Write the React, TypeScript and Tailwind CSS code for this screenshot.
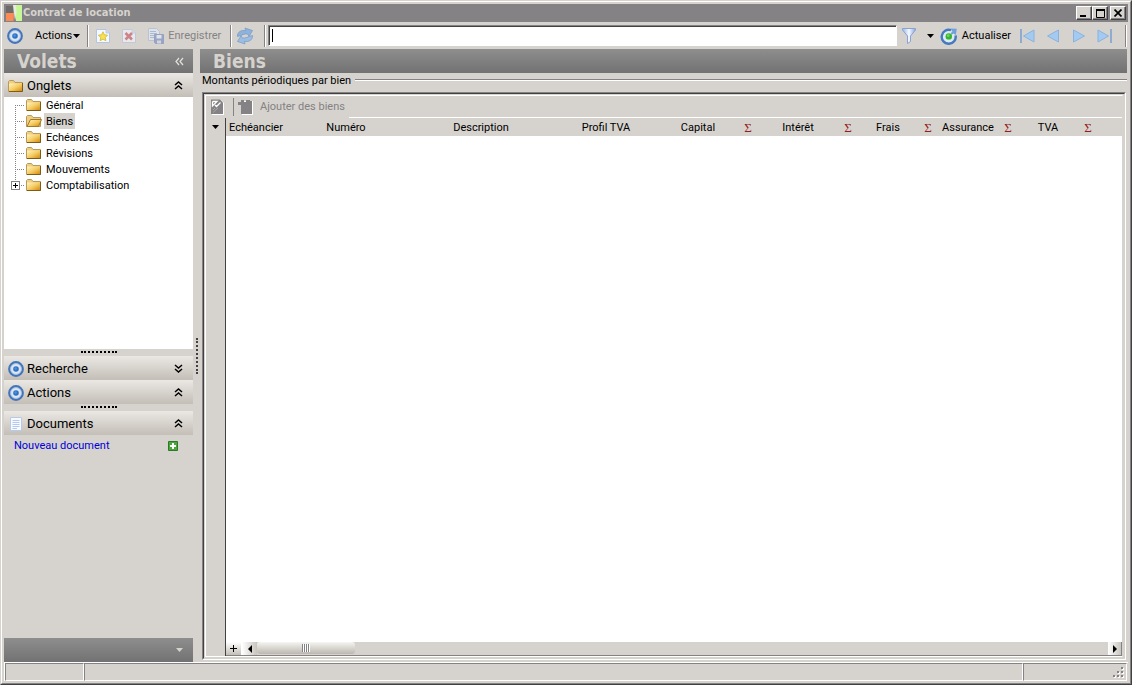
import { useState } from 'react';
import type { ReactNode } from 'react';

const tabs = ['Général', 'Biens', 'Echéances', 'Révisions', 'Mouvements', 'Comptabilisation'];

const columns = [
  { label: 'Echéancier', width: 'w-[60px]' },
  { label: 'Numéro', width: 'w-[120px]' },
  { label: 'Description', width: 'w-[150px]' },
  { label: 'Profil TVA', width: 'w-[100px]' },
  { label: 'Capital', width: 'w-[100px]', sum: true },
  { label: 'Intérêt', width: 'w-[100px]', sum: true },
  { label: 'Frais', width: 'w-[80px]', sum: true },
  { label: 'Assurance', width: 'w-[80px]', sum: true },
  { label: 'TVA', width: 'w-[80px]', sum: true },
];

const TargetIcon = () => (
  <svg className="h-4 w-4 shrink-0" viewBox="0 0 16 16">
    <circle cx="8" cy="8" r="6.8" fill="#dce6f1" stroke="#4475bb" strokeWidth="2.2" />
    <circle cx="8" cy="8" r="5.4" fill="none" stroke="#9db9dd" strokeWidth="0.7" />
    <circle cx="8" cy="8" r="2.8" fill="#2f72c4" />
    <circle cx="7.6" cy="7.5" r="1.2" fill="#4f92dc" />
  </svg>
);

const FolderIcon = ({ open = false }: { open?: boolean }) => (
  <svg className="h-4 w-4 shrink-0" viewBox="0 0 16 16">
    <defs>
      <linearGradient id="folder" x1="0" y1="0" x2="1" y2="1">
        <stop offset="0.05" stopColor="#fff0b8" />
        <stop offset="0.5" stopColor="#f5cb60" />
        <stop offset="1" stopColor="#cf8410" />
      </linearGradient>
    </defs>
    <path d="M0.5 13.5V3.5L1.5 2.5H5.5L7 4.5H14.5V13.5Z" fill="#efd083" stroke="#b59a5c" />
    {open ? (
      <path d="M1 13.5L4.5 6.5H15.5L12.5 13.5Z" fill="url(#folder)" stroke="#a37b28" />
    ) : (
      <path d="M1 5.5H14.5V13.5H1Z" fill="url(#folder)" />
    )}
    {!open && <path d="M1 13.5H14.5V5" fill="none" stroke="#7d5c1a" />}
  </svg>
);

const Page = () => (
  <>
    <path d="M1.5 1.5H11L14.5 5V14.5H1.5Z" fill="#f4f8ff" stroke="#b3c3e3" />
    <path d="M11 1.5V5H14.5" fill="#cddcf5" stroke="#b3c3e3" strokeWidth="0.8" />
  </>
);

const NewIcon = () => (
  <svg className="h-4 w-4" viewBox="0 0 16 16">
    <Page />
    <path
      d="M8 3.8L9.4 6.8L12.6 7.2L10.3 9.5L10.9 12.7L8 11.1L5.1 12.7L5.7 9.5L3.4 7.2L6.6 6.8Z"
      fill="#f7e24a"
      stroke="#d3bb48"
      strokeWidth="0.9"
    />
  </svg>
);

const DeleteIcon = () => (
  <svg className="h-4 w-4 opacity-60" viewBox="0 0 16 16">
    <Page />
    <path d="M4.5 5L11 11.5M11 5L4.5 11.5" stroke="#c8505c" strokeWidth="2.6" />
  </svg>
);

const SaveIcon = () => (
  <svg className="h-4 w-4 opacity-60" viewBox="0 0 16 16">
    <path d="M0.5 0.5H8.500L11.500 3.5V12.5H0.5Z" fill="#e6edf8" stroke="#a9b9dc" />
    <path d="M2 3.5H8M2 5.5H9M2 7.5H8M2 9.5H6" stroke="#8fa8d6" />
    <path d="M6.5 6.5H15.5V15.5H7.5L6.5 14.5Z" fill="#7288c0" stroke="#6d82b8" />
    <path d="M8.5 7H13.5V10.500H8.5Z" fill="#e9eefa" />
    <path d="M9 12.500H13V15.5H9Z" fill="#d2d8ea" />
  </svg>
);

const RefreshIcon = () => (
  <svg className="h-[18px] w-[18px]" viewBox="0 0 18 18">
    <path
      d="M1.500 9.500C1 5 5.500 2.500 9.500 3.800L9 1L16.500 3.500L13 9.500L11.800 7.200C8.500 6 6.500 8.500 1.500 9.500Z"
      fill="#8eb2dc"
      stroke="#7499c6"
      strokeWidth="0.7"
    />
    <path
      d="M16.500 8.500C17 13 12.500 15.500 8.500 14.200L9 17L1.500 14.500L5 8.800L6.200 10.800C9.500 12 11.500 9.500 16.500 8.500Z"
      fill="#9bbde3"
      stroke="#7499c6"
      strokeWidth="0.7"
    />
  </svg>
);

const ActualiserIcon = () => (
  <svg className="h-[18px] w-[18px]" viewBox="0 0 18 18">
    <circle cx="8.5" cy="9.5" r="6" fill="#dfeaf5" />
    <path d="M11 3.200A7 7 0 1 0 15.600 8.500" fill="none" stroke="#4579c0" strokeWidth="2.4" />
    <path d="M10.500 1.500L16.800 1.800L15.800 8L13.800 6.400L11.500 7.800L10.800 6L12.500 4.600Z" fill="#6fa2da" />
    <circle cx="8.8" cy="9.4" r="3.2" fill="#35b52c" />
    <circle cx="8.200" cy="8.6" r="1.5" fill="#6bd65c" />
  </svg>
);

const FilterIcon = () => (
  <svg className="h-4 w-4" viewBox="0 0 16 16">
    <defs>
      <linearGradient id="funnel">
        <stop offset="0.1" stopColor="#a9c4ee" />
        <stop offset="0.5" stopColor="#f5faff" />
        <stop offset="1" stopColor="#86a6de" />
      </linearGradient>
    </defs>
    <path d="M1.5 0.5H14.5V2L9.5 8V13.500L6.5 15.5V8L1.5 2Z" fill="url(#funnel)" stroke="#8aa2d2" />
  </svg>
);

const NavIcon = ({ bar = false, back = false }: { bar?: boolean; back?: boolean }) => (
  <svg className={back ? 'h-4 w-4' : 'h-4 w-4 -scale-x-100'} viewBox="0 0 16 16">
    <path d={bar ? 'M15 2V14L4.5 8Z' : 'M13.5 2V14L2.5 8Z'} fill="#a3cbf2" stroke="#8bb2de" />
    {bar && <path d="M2 1V15" stroke="#8fabd0" strokeWidth="2" />}
  </svg>
);

const DocumentIcon = () => (
  <svg className="h-4 w-4 shrink-0" viewBox="0 0 16 16">
    <path d="M2.5 1.5H13.5V14.5H2.5Z" fill="#f7faff" stroke="#b9c9ea" />
    <path d="M4.500 4.5H11.5M4.5 6.5H11.5M4.5 8.5H11.5M4.5 10.5H11.5M4.5 12.5H9" stroke="#b3c9f4" />
  </svg>
);

const CheckIcon = () => (
  <svg className="h-4 w-4" viewBox="0 0 16 16">
    <path d="M3 1H12L15 4V16H3Z" fill="#fff" />
    <path d="M2 0.5H11L14 3.5V15H2Z" fill="#848284" />
    <path d="M3.500 2.500H8L3.500 7V2.500M6 6L7.500 7.500L11.5 3.500" fill="none" stroke="#fff" strokeWidth="1.3" />
    <path d="M4 13.5L9 9M4 11L6 9" stroke="#aaa8a4" />
  </svg>
);

const AddIcon = () => (
  <svg className="h-4 w-4" viewBox="0 0 16 16">
    <path d="M4 2H15V16H4Z" fill="#fff" />
    <path d="M3 6H0V3H3V1H6V3H8V1H12V2H14V15H3Z" fill="#848284" />
  </svg>
);

const Chevrons = ({ down = false }: { down?: boolean }) => (
  <svg className={down ? 'h-[9px] w-[9px] rotate-180' : 'h-[9px] w-[9px]'} viewBox="0 0 9 9">
    <path d="M1 4L4.5 1L8 4M1 8L4.5 5L8 8" fill="none" stroke="#000" strokeWidth="1.5" />
  </svg>
);

const Caret = ({ className = 'text-black' }: { className?: string }) => (
  <svg className={`h-1 w-[7px] shrink-0 ${className}`} viewBox="0 0 7 4">
    <path d="M0 0H7L3.5 4Z" fill="currentColor" />
  </svg>
);

const Separator = () => <div className="h-[22px] w-[2px] shrink-0 border-r border-l border-r-white border-l-[#848284]" />;

const TitleBar = () => {
  const button =
    'flex h-[14px] w-4 items-center justify-center border border-t-white border-l-white border-r-[#424142] border-b-[#424142] bg-[#d6d3ce] shadow-[inset_-1px_-1px_0_#848284]';
  return (
    <header className="flex h-[18px] shrink-0 items-center bg-[#848284] pr-[2px] pl-[2px]">
      <svg className="h-[18px] w-4" viewBox="0 0 16 18">
        <path d="M0 2H7V9H0Z" fill="#6e6c6a" />
        <path d="M0 9H8L7.5 17H0Z" fill="#fb8a55" />
        <path d="M8 1H16V17H10Z" fill="#c6f795" />
        <path d="M7 1H10L10.500 9L9 16L8 9Z" fill="#e5eedc" />
      </svg>
      <h1 className="ml-px font-['DejaVu_Sans_Condensed',sans-serif] text-[11px] leading-[18px] font-bold text-[#d6d3ce]">
        Contrat de location
      </h1>
      <div className="ml-auto flex">
        <button aria-label="Réduire" className={button}>
          <svg className="h-2 w-[10px]" viewBox="0 0 10 8">
            <path d="M1 6H7V8H1Z" />
          </svg>
        </button>
        <button aria-label="Agrandir" className={button}>
          <svg className="h-[9px] w-[9px]" viewBox="0 0 9 9">
            <path d="M0.5 1V8.500H8.500V1M0 1H9" fill="none" stroke="#000" />
            <path d="M0 0H9V2H0Z" />
          </svg>
        </button>
        <button aria-label="Fermer" className={`ml-[2px] ${button}`}>
          <svg className="h-2 w-2" viewBox="0 0 8 8">
            <path d="M0.500 0.500L7.500 7.500M7.500 0.500L0.500 7.500" stroke="#000" strokeWidth="1.7" />
          </svg>
        </button>
      </div>
    </header>
  );
};

const Toolbar = () => (
  <div className="flex h-[27px] shrink-0 items-center pr-px pl-[3px]">
    <TargetIcon />
    <button className="ml-3 flex items-center gap-px">
      Actions
      <Caret />
    </button>
    <div className="ml-[7px]">
      <Separator />
    </div>
    <button aria-label="Nouveau" className="ml-[6px]">
      <NewIcon />
    </button>
    <button aria-label="Supprimer" className="ml-[10px]">
      <DeleteIcon />
    </button>
    <button className="ml-[11px] flex items-center gap-1 text-[#848284]">
      <SaveIcon />
      Enregistrer
    </button>
    <div className="ml-[9px]">
      <Separator />
    </div>
    <button aria-label="Synchroniser" className="ml-1">
      <RefreshIcon />
    </button>
    <div className="ml-[10px]">
      <Separator />
    </div>
    <div className="relative ml-[2px] flex-1">
      <input
        type="text"
        aria-label="Recherche rapide"
        className="block h-[21px] w-full border border-t-[#848284] border-l-[#848284] border-r-white border-b-white bg-white px-1 shadow-[inset_1px_1px_0_#424142] outline-none"
      />
      <span className="absolute top-1 left-1 h-[13px] w-px bg-black" />
    </div>
    <button aria-label="Filtrer" className="ml-1">
      <FilterIcon />
    </button>
    <button aria-label="Options du filtre" className="ml-[10px]">
      <Caret />
    </button>
    <button className="ml-[6px] flex items-center gap-1">
      <ActualiserIcon />
      Actualiser
    </button>
    <div className="ml-2 flex gap-[10px]">
      <button aria-label="Premier">
        <NavIcon bar back />
      </button>
      <button aria-label="Précédent">
        <NavIcon back />
      </button>
      <button aria-label="Suivant">
        <NavIcon />
      </button>
      <button aria-label="Dernier">
        <NavIcon bar />
      </button>
    </div>
    <div className="ml-3">
      <Separator />
    </div>
  </div>
);

const PanelTitle = ({ title, children }: { title: string; children?: ReactNode }) => (
  <div className="flex h-6 shrink-0 items-center justify-between bg-linear-to-b from-[#8e8e8e] to-[#727272] pr-[9px] pl-[13px]">
    <h2 className="font-['DejaVu_Sans_Condensed',sans-serif] text-[19px] leading-6 font-bold text-[#d6d3ce]">{title}</h2>
    {children}
  </div>
);

interface SectionProps {
  title: string;
  icon: ReactNode;
  collapsed?: boolean;
}

const SectionHeader = ({ title, icon, collapsed }: SectionProps) => (
  <button className="flex h-6 w-full shrink-0 items-center bg-linear-to-b from-[#ebe7e3] to-[#c3bfb7] pt-px pr-[10px] pl-1 text-[13px]">
    {icon}
    <span className="mr-auto ml-[3px]">{title}</span>
    <Chevrons down={collapsed} />
  </button>
);

const Grip = () => (
  <div className="flex h-[7px] shrink-0 items-start justify-center pt-[2px]">
    <div className="w-9 border-t-2 border-dotted border-black" />
  </div>
);

const TreeLines = ({ first, last }: { first: boolean; last: boolean }) => (
  <svg className="h-4 w-[22px] shrink-0" viewBox="0 0 22 16" shapeRendering="crispEdges">
    <path
      d={`M11.500 ${first ? 8 : 0}V${last ? 8 : 16}M11 8.500H21`}
      fill="none"
      stroke="#848284"
      strokeDasharray="1 1"
    />
    {last && (
      <>
        <path d="M7.500 4.500H15.500V12.500H7.500Z" fill="#fff" stroke="#848284" />
        <path d="M9 8.500H14M11.500 6V11" stroke="#000" />
      </>
    )}
  </svg>
);

const Sidebar = () => {
  const [selected, setSelected] = useState('Biens');

  return (
    <aside className="flex w-[189px] shrink-0 flex-col">
      <PanelTitle title="Volets">
        <button aria-label="Masquer les volets">
          <svg className="h-[9px] w-[9px]" viewBox="0 0 9 9">
            <path d="M4 1L1 4.500L4 8M8 1L5 4.500L8 8" fill="none" stroke="#e4e2de" strokeWidth="1.2" />
          </svg>
        </button>
      </PanelTitle>
      <SectionHeader title="Onglets" icon={<FolderIcon />} />
      <ul className="h-[252px] shrink-0 overflow-hidden bg-white">
        {tabs.map((tab, index) => (
          <li key={tab} className="flex h-4 items-center">
            <TreeLines first={index === 0} last={index === tabs.length - 1} />
            <FolderIcon open={tab === selected} />
            <button
              onClick={() => setSelected(tab)}
              className={tab === selected ? 'ml-[2px] h-4 bg-[#d6d3ce] px-[2px] pt-px' : 'ml-[2px] h-4 px-[2px] pt-px'}
            >
              {tab}
            </button>
          </li>
        ))}
      </ul>
      <Grip />
      <SectionHeader title="Recherche" icon={<TargetIcon />} collapsed />
      <SectionHeader title="Actions" icon={<TargetIcon />} />
      <Grip />
      <SectionHeader title="Documents" icon={<DocumentIcon />} />
      <div className="flex items-center justify-between pt-[3px] pr-[15px] pl-[10px]">
        <a href="#" className="text-[#0000d8]">
          Nouveau document
        </a>
        <button aria-label="Ajouter un document">
          <svg className="h-[10px] w-[10px]" viewBox="0 0 10 10">
            <path d="M0.500 0.500H9.500V9.500H0.500Z" fill="#49a63b" stroke="#2d7a25" />
            <path d="M5 2V8M2 5H8" stroke="#fff" strokeWidth="2" />
          </svg>
        </button>
      </div>
      <div className="mt-auto flex h-6 items-center justify-end bg-linear-to-b from-[#8e8e8e] to-[#727272] pr-[10px]">
        <button aria-label="Configurer les volets">
          <Caret className="text-[#d6d3ce]" />
        </button>
      </div>
    </aside>
  );
};

const ScrollBar = () => (
  <div className="flex h-[14px] shrink-0 border-b border-[#848284] bg-[#d6d3ce]">
    <button aria-label="Ajouter une ligne" className="flex w-[15px] items-center justify-center bg-linear-to-b from-white to-[#c3bfb7]">
      <svg className="h-[7px] w-[7px]" viewBox="0 0 7 7">
        <path d="M3.500 0V7M0 3.500H7" stroke="#000" />
      </svg>
    </button>
    <button aria-label="Défiler à gauche" className="flex w-4 items-center justify-center border-l border-white bg-linear-to-r from-white to-[#c9c5bd]">
      <svg className="h-2 w-1" viewBox="0 0 4 8">
        <path d="M4 0V8L0 4Z" />
      </svg>
    </button>
    <div className="flex h-3 w-[98px] items-center justify-center rounded-[3px] bg-linear-to-b from-[#f6f5f2] to-[#bcb8b0]">
      {[0, 1, 2, 3].map((line) => (
        <span key={line} className="h-2 w-[2px] border-l border-[#848284] bg-white" />
      ))}
    </div>
    <button aria-label="Défiler à droite" className="ml-auto flex w-[14px] items-center justify-center border-r border-[#848284] bg-linear-to-r from-white to-[#c9c5bd]">
      <svg className="h-2 w-1" viewBox="0 0 4 8">
        <path d="M0 0V8L4 4Z" />
      </svg>
    </button>
  </div>
);

const Grid = () => (
  <div className="flex min-h-0 flex-1">
    <div className="flex w-5 shrink-0 justify-center border-r border-[#424142] pt-[7px] pr-px">
      <button aria-label="Choisir les colonnes" className="flex h-1">
        <Caret />
      </button>
    </div>
    <div className="flex min-w-0 flex-1 flex-col bg-white">
      <table className="w-full table-fixed border-collapse">
        <thead>
          <tr className="h-[18px] bg-[#d6d3ce]">
            {columns.map((column) => (
              <th key={column.label} className={`p-0 font-normal ${column.width}`}>
                <div className="flex items-center pt-px">
                  <span className="flex-1 text-center">{column.label}</span>
                  {column.sum && (
                    <span className="w-4 text-center font-['Liberation_Serif',serif] text-[13px] leading-4 text-[#941c1c]">Σ</span>
                  )}
                </div>
              </th>
            ))}
            <th className="p-0" />
          </tr>
        </thead>
        <tbody />
      </table>
      <div className="flex-1" />
      <ScrollBar />
    </div>
  </div>
);

const Content = () => (
  <main className="flex min-w-0 flex-1 flex-col pr-px">
    <PanelTitle title="Biens" />
    <div className="flex h-[19px] shrink-0 items-start gap-1 pl-[2px]">
      <h3 className="leading-4">Montants périodiques par bien</h3>
      <div className="mt-[6px] h-[2px] flex-1 border-t border-b border-t-[#848284] border-b-white" />
    </div>
    <section className="mr-px mb-[2px] ml-[2px] flex min-h-0 flex-1 border border-t-[#848284] border-l-[#848284] border-r-white border-b-white">
      <div className="flex min-w-0 flex-1 border border-t-[#424142] border-l-[#424142] border-r-[#d6d3ce] border-b-[#d6d3ce] p-px">
        <div className="flex min-w-0 flex-1 flex-col border border-t-white border-l-white border-r-[#d6d3ce] border-b-white">
          <div className="flex h-[22px] shrink-0">
            <div className="flex items-center pl-[3px]">
              <button aria-label="Valider">
                <CheckIcon />
              </button>
              <div className="mr-[4px] ml-[8px] h-[18px] border-l border-[#848284]" />
              <button className="flex items-center gap-[6px] pr-1 text-[#848284]">
                <AddIcon />
                Ajouter des biens
              </button>
            </div>
            <div className="flex-1 border-b border-white" />
          </div>
          <Grid />
        </div>
      </div>
    </section>
  </main>
);

const StatusBar = () => {
  const cell = 'border border-t-[#848284] border-l-[#848284] border-r-white border-b-white';
  return (
    <footer className="flex h-[19px] shrink-0 border-t border-l border-white pr-px">
      <div className={`w-[79px] ${cell}`} />
      <div className={`flex-1 ${cell}`} />
      <div className={`flex w-[104px] items-end justify-end p-[2px] ${cell}`}>
        <svg className="h-[11px] w-[11px]" viewBox="0 0 11 11">
          <path d="M9 1H11V3H9ZM5 5H7V7H5ZM9 5H11V7H9ZM1 9H3V11H1ZM5 9H7V11H5ZM9 9H11V11H9Z" fill="#fff" />
          <path d="M8 0H10V2H8ZM4 4H6V6H4ZM8 4H10V6H8ZM0 8H2V10H0ZM4 8H6V10H4ZM8 8H10V10H8Z" fill="#848284" />
        </svg>
      </div>
    </footer>
  );
};

const App = () => (
  <div className="flex h-screen flex-col border border-t-[#d6d3ce] border-l-[#d6d3ce] border-r-[#424142] border-b-[#424142] bg-[#d6d3ce] font-[Roboto,sans-serif] text-[11px] leading-4 text-black">
    <div className="flex min-h-0 flex-1 flex-col border border-t-white border-l-white border-r-[#848284] border-b-[#848284] p-[2px]">
      <TitleBar />
      <Toolbar />
      <div className="flex min-h-0 flex-1">
        <Sidebar />
        <div className="flex w-[7px] shrink-0 items-center justify-center">
          <div className="h-9 border-l-2 border-dotted border-[#424142]" />
        </div>
        <Content />
      </div>
      <StatusBar />
    </div>
  </div>
);

export default App;
